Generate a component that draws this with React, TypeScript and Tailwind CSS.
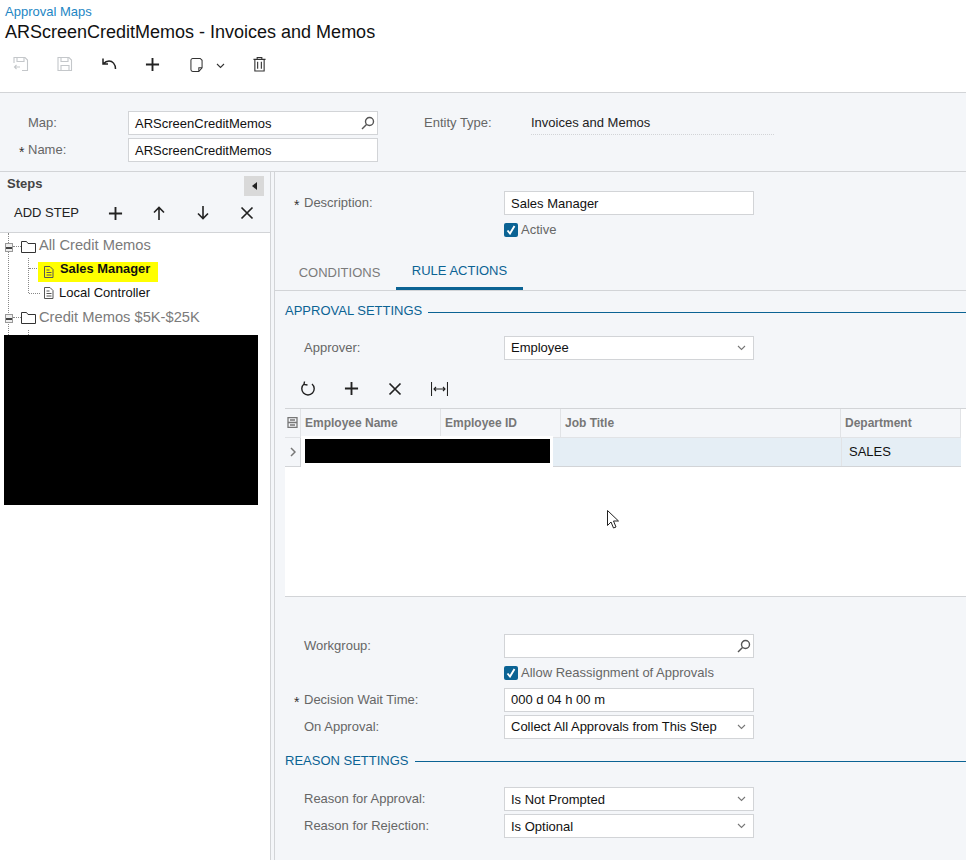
import React from "react";

const Ico = ({ w = 20, h = 20, vb = "0 0 20 20", c = "#222", sw = 1.5, children }: any) => (
  <svg width={w} height={h} viewBox={vb} fill="none" stroke={c} strokeWidth={sw} className="shrink-0">
    {children}
  </svg>
);
const Plus = ({ s = 16 }: { s?: number }) => (
  <Ico w={s} h={s} vb="0 0 16 16" sw={2}><path d="M8 1v14M1 8h14" /></Ico>
);
const Cross = () => (
  <Ico w={14} h={14} vb="0 0 14 14" sw={1.7}><path d="M1.5 1.5l11 11M12.5 1.5l-11 11" /></Ico>
);
const Chevron = ({ c = "#777" }: { c?: string }) => (
  <svg width="9" height="6" viewBox="0 0 9 6" fill="none" stroke={c} strokeWidth="1.1"><path d="M1 1l3.5 3.5L8 1" /></svg>
);
const Search = () => (
  <svg width="14" height="14" viewBox="0 0 14 14" fill="none" stroke="#555" strokeWidth="1.4" className="-mr-[5px]">
    <circle cx="8.5" cy="5.5" r="4" /><path d="M5.5 8.5L1 13" />
  </svg>
);
const Check = () => (
  <span className="w-[14px] h-[14px] rounded-[2px] bg-[#0b6394] flex items-center justify-center shrink-0">
    <svg width="10" height="10" viewBox="0 0 10 10" fill="none" stroke="#fff" strokeWidth="1.9"><path d="M1.5 5.5L4 8.5 8.5 1" /></svg>
  </span>
);
const Field = ({ w = "w-[250px]", text = "", right }: any) => (
  <div className={`${w} h-[24px] bg-white border border-[#d2d4d7] pl-[6px] pr-[7px] flex items-center justify-between text-[13px] text-[#111]`}>
    <span className="whitespace-nowrap pt-[1px]">{text}</span>
    {right}
  </div>
);
const Row = ({ label, req, children, className = "" }: any) => (
  <div className={`flex items-center h-[24px] pl-[29px] relative ${className}`}>
    {req && <span className="absolute left-[19px] top-[4px] text-[14px] text-[#333]">*</span>}
    <span className="w-[200px] text-[13px] text-[#666]">{label}</span>
    {children}
  </div>
);
const SectionTitle = ({ text, className = "" }: any) => (
  <div className={`flex items-center pl-[10px] ${className}`}>
    <span className="text-[13px] text-[#0b6394] whitespace-nowrap">{text}</span>
    <span className="flex-1 h-px bg-[#0b6394] ml-[6px] mt-[3px]" />
  </div>
);
const Folder = () => (
  <svg width="15" height="13" viewBox="0 0 15 13" fill="none" stroke="#333" strokeWidth="1" className="shrink-0">
    <path d="M.5 12.5v-11h5l1.5 2h7.500v9z" />
  </svg>
);
const Doc = () => (
  <svg width="11" height="12" viewBox="0 0 11 12" fill="none" stroke="#555" strokeWidth="1" className="shrink-0">
    <path d="M1.500.5h5.500l3 3v8h-8.500zM3.500 4h3M3.500 6.500h5M3.500 9h5" />
  </svg>
);
const Minus = () => (
  <span className="w-[8px] h-[9px] mt-[3px] border border-[#999] bg-[#eee] flex items-center justify-center shrink-0 z-10">
    <span className="w-[6px] h-[2px] bg-[#444]" />
  </span>
);
const Th = ({ w, children }: any) => (
  <div className={`${w} h-full border-r border-[#e1e3e6] pl-[4px] flex items-center text-[12px] font-bold text-[#777] whitespace-nowrap`}>{children}</div>
);
const Connector = () => <span className="w-[8px] border-t border-dotted border-[#888] shrink-0" />;

export default function App() {
  return (
    <div className="w-[966px] h-[860px] overflow-hidden bg-[#f4f6f9] flex flex-col relative font-['Liberation_Sans',Arial,sans-serif]">
      <header className="h-[93px] bg-white border-b border-[#d2d4d7] shrink-0 pl-[5px] pt-[5px]">
        <div className="text-[13px] leading-[14px] text-[#1d86c4]">Approval Maps</div>
        <div className="text-[18px] leading-[22px] mt-[2px] text-[#111] whitespace-nowrap">ARScreenCreditMemos - Invoices and Memos</div>
        <div className="flex items-center mt-[11px] h-[20px]">
          <span className="ml-[8px] w-[16px]">
            <Ico w={16} h={16} vb="0 0 16 16" c="#c4c7ca" sw={1.1}><path d="M1 7V1.500h11l2.500 2.500v10.500H9M4 1.500v4h7v-4M7 11H1.500M3.500 9l-2 2 2 2" /></Ico>
          </span>
          <span className="ml-[28px] w-[16px]">
            <Ico w={16} h={16} vb="0 0 16 16" c="#c4c7ca" sw={1.1}><path d="M1 1.500h11l2.500 2.500v10.500H1zM4 1.500v4h7v-4M4 14.500v-5h8v5" /></Ico>
          </span>
          <span className="ml-[28px] w-[16px]">
            <Ico w={16} h={14} vb="0 0 16 14" sw={1.5}><path d="M14.500 12c0-5-3-8-6.500-8-2.500 0-4 1-6 3M2 1.500V7h5" /></Ico>
          </span>
          <span className="ml-[28px]"><Plus s={15} /></span>
          <span className="ml-[30px] w-[13px]">
            <Ico w={13} h={15} vb="0 0 14 16" c="#333" sw={1.1}><path d="M3 1.500h8l2 2v8l-3.500 4H3a2 2 0 01-2-2v-10a2 2 0 012-2zM13 11.500H9.500v4" /></Ico>
          </span>
          <span className="ml-[13px] mt-[3px]"><Chevron c="#333" /></span>
          <span className="ml-[28px]">
            <Ico w={13} h={16} vb="0 0 14 16" c="#333" sw={1.2}><path d="M.5 3h13M4.500 3V1h5v2M2 3v12.500h10V3M5 5.500v7.500M9 5.500v7.500" /></Ico>
          </span>
        </div>
      </header>

      <section className="h-[78px] shrink-0 relative pt-[18px] text-[13px] text-[#666]">
        <div className="flex h-[24px] items-center">
          <span className="w-[128px] pl-[28px] -mt-[1px]">Map:</span>
          <Field text="ARScreenCreditMemos" right={<Search />} />
          <span className="ml-[46px] w-[107px] -mt-[1px]">Entity Type:</span>
          <span className="w-[243px] h-[24px] border-b border-dotted border-[#d2d4d7] text-[#222] flex items-center">Invoices and Memos</span>
        </div>
        <div className="flex h-[24px] items-center mt-[3px] relative">
          <span className="absolute left-[19px] top-[4px] text-[14px] text-[#333]">*</span>
          <span className="w-[128px] pl-[28px] -mt-[1px]">Name:</span>
          <Field text="ARScreenCreditMemos" />
        </div>
      </section>

      <main className="flex-1 flex border-t border-[#d2d4d7] min-h-0">
        <aside className="w-[271px] shrink-0 border-r border-[#d2d4d7] flex flex-col">
          <div className="h-[61px] shrink-0 border-b border-[#d2d4d7] relative">
            <div className="pl-[7px] pt-[2px] text-[13px] leading-[19px] font-bold text-[#444]">Steps</div>
            <span className="absolute left-[244px] top-[4px] w-[20px] h-[20px] bg-[#d9d9d9] flex items-center justify-center">
              <svg width="5" height="8" viewBox="0 0 5 8" fill="#222"><path d="M5 0v8L0 4z" /></svg>
            </span>
            <div className="flex items-center pl-[14px] mt-[8px] h-[24px]">
              <span className="w-[94px] text-[13px] text-[#222]">ADD STEP</span>
              <span className="w-[44px]"><Plus s={15} /></span>
              <span className="w-[44px] pl-[1px]">
                <Ico w={12} h={14} vb="0 0 12 14" sw={1.6}><path d="M6 14V1.500M1 6.500l5-5 5 5" /></Ico>
              </span>
              <span className="w-[44px] pl-[1px]">
                <Ico w={12} h={14} vb="0 0 12 14" sw={1.6}><path d="M6 0v12.500M1 7.500l5 5 5-5" /></Ico>
              </span>
              <Cross />
            </div>
          </div>
          <div className="flex-1 bg-white relative pt-[1px]">
            <span className="absolute left-[8px] top-0 h-[102px] border-l border-dotted border-[#888]" />
            <span className="absolute left-[28px] top-[25px] h-[35px] border-l border-dotted border-[#888]" />
            <span className="absolute left-[28px] top-[97px] h-[5px] border-l border-dotted border-[#888]" />
            <span className="absolute left-[29px] top-[35px] w-[8px] border-t border-dotted border-[#888]" />
            <span className="absolute left-[29px] top-[60px] w-[11px] border-t border-dotted border-[#888]" />
            <div className="flex items-center h-[24px] pl-[5px]">
              <Minus />
              <Connector />
              <Folder />
              <span className="ml-[3px] text-[14.700px] text-[#7b7b7b] -mt-[1px]">All Credit Memos</span>
            </div>
            <div className="flex items-center h-[20px] mt-[4px] ml-[38px] w-[120px] bg-[#ffff00] pl-[5px]">
              <Doc />
              <span className="ml-[6px] text-[12.900px] font-bold text-[#111] -mt-[6px]">Sales Manager</span>
            </div>
            <div className="flex items-center h-[22px] ml-[43px]">
              <Doc />
              <span className="ml-[5px] text-[13px] text-[#111]">Local Controller</span>
            </div>
            <div className="flex items-center h-[24px] mt-[1px] pl-[5px]">
              <Minus />
              <Connector />
              <Folder />
              <span className="ml-[3px] text-[14.700px] text-[#7b7b7b]">Credit Memos $5K-$25K</span>
            </div>
            <div className="absolute left-[4px] top-[102px] w-[254px] h-[170px] bg-black" />
          </div>
        </aside>
        <div className="w-[3px] shrink-0" />
        <section className="flex-1 min-w-0 border-l border-[#d2d4d7] pl-[10px]">
          <div className="-ml-[10px] pt-[19px]">
            <Row label="Description:" req><Field text="Sales Manager" /></Row>
            <div className="flex items-center ml-[229px] mt-[6px] gap-[3px] text-[13px] text-[#666] h-[17px]"><Check /><span>Active</span></div>
          </div>
          <div className="-ml-[10px] mt-[14px] h-[39px] border-b border-[#d2d4d7] flex items-end pl-[8px]">
            <span className="w-[113px] h-[38px] flex items-center justify-center text-[13px] text-[#7b7b7b] pt-[4px]">CONDITIONS</span>
            <span className="w-[127px] h-[39px] flex items-center justify-center text-[13px] text-[#0b6394] border-b-[3px] border-[#0b6394] pt-[3px]">RULE ACTIONS</span>
          </div>
          <SectionTitle text="APPROVAL SETTINGS" className="-ml-[10px] mt-[10px]" />
          <Row label="Approver:" className="-ml-[10px] mt-[15px]"><Field text="Employee" right={<Chevron />} /></Row>
          <div className="flex items-center h-[20px] mt-[19px] pl-[15px]">
            <span className="w-[44px]">
              <Ico w={15} h={16} vb="0 0 15 16" sw={1.4}><path d="M4 3a6.200 6.200 0 108 0M4.500 .5L4 3.500l3.500.5" /></Ico>
            </span>
            <span className="w-[44px]"><Plus s={15} /></span>
            <span className="w-[43px]"><Cross /></span>
            <Ico w={17} h={14} vb="0 0 17 14" c="#222" sw={1.1}><path d="M.5 0v14M16.500 0v14M3 7h11M5 5L3 7l2 2M12 5l2 2-2 2" /></Ico>
          </div>
          <div className="mt-[9px] h-[189px] border-t border-b border-[#d2d4d7] relative bg-white">
            <div className="flex h-[29px] bg-[#f4f6f9] border-b border-[#e1e3e6] w-[676px]">
              <div className="w-[16px] h-full border-r border-[#e1e3e6] flex items-center justify-center">
                <svg width="11" height="11" viewBox="0 0 11 11" fill="none" stroke="#777" strokeWidth="1.300"><path d="M1 .7h9v9.600H1zM1 5.500h9M3 3h5M3 8h5" /></svg>
              </div>
              <Th w="w-[140px]">Employee Name</Th>
              <Th w="w-[120px]">Employee ID</Th>
              <Th w="w-[280px]">Job Title</Th>
              <Th w="w-[120px]">Department</Th>
            </div>
            <div className="flex h-[29px] bg-[#e5eef5] border-b border-[#d2d4d7] w-[676px]">
              <div className="w-[16px] h-full border-r border-[#d2d4d7] flex items-center justify-center bg-[#f4f6f9]">
                <svg width="6" height="10" viewBox="0 0 6 10" fill="none" stroke="#777" strokeWidth="1.500"><path d="M1 1l4 4-4 4" /></svg>
              </div>
              <div className="w-[400px]" />
              <div className="w-[140px]" />
              <div className="flex-1 pl-[7px] flex items-center text-[13px] text-[#111] border-l border-[#e1e3e6]">SALES</div>
            </div>
            <div className="absolute left-[16px] top-[27px] w-[252px] h-[32px] bg-white p-[3px_3px_4px_4px]">
              <div className="w-[245px] h-[24px] bg-black" />
            </div>
          </div>
          <Row label="Workgroup:" className="-ml-[10px] mt-[37px]"><Field right={<Search />} /></Row>
          <div className="flex items-center ml-[219px] mt-[7px] gap-[3px] text-[13px] text-[#666] h-[17px]"><Check /><span>Allow Reassignment of Approvals</span></div>
          <Row label="Decision Wait Time:" req className="-ml-[10px] mt-[6px]"><Field text="000 d 04 h 00 m" /></Row>
          <Row label="On Approval:" className="-ml-[10px] mt-[3px]"><Field text="Collect All Approvals from This Step" right={<Chevron />} /></Row>
          <SectionTitle text="REASON SETTINGS" className="-ml-[10px] mt-[12px]" />
          <Row label="Reason for Approval:" className="-ml-[10px] mt-[17px]"><Field text="Is Not Prompted" right={<Chevron />} /></Row>
          <Row label="Reason for Rejection:" className="-ml-[10px] mt-[3px]"><Field text="Is Optional" right={<Chevron />} /></Row>
        </section>
      </main>

      <svg className="absolute left-[607px] top-[510px]" width="13" height="20" viewBox="0 0 13 20" fill="#fff" stroke="#222" strokeWidth="1">
        <path d="M.5.5v15l3.500-3.500 2.500 6 2.500-1-2.500-6h5z" />
      </svg>
    </div>
  );
}
